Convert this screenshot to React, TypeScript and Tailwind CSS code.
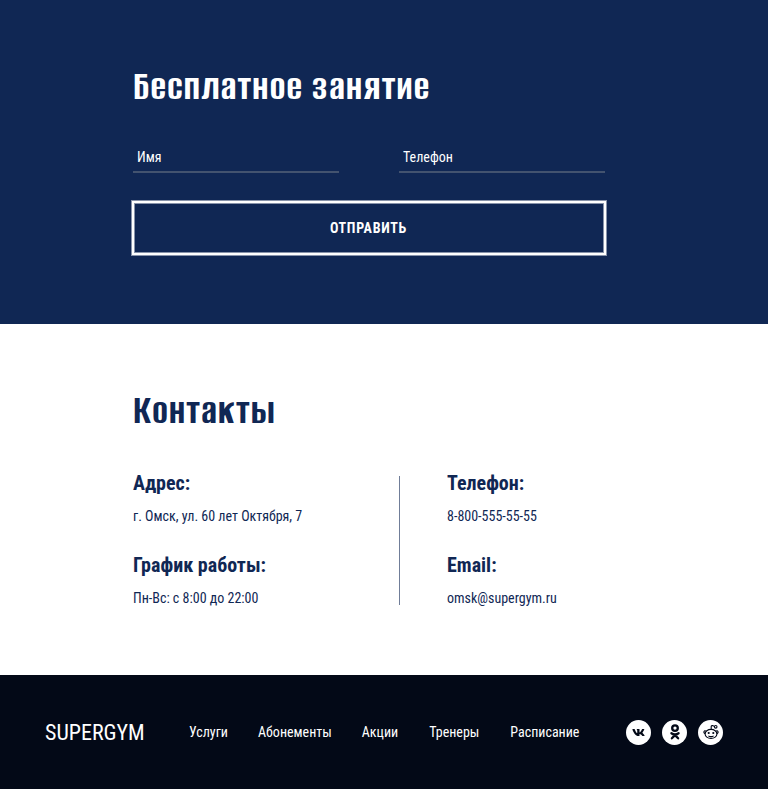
import type { ReactNode } from "react";
import { FaVk } from "react-icons/fa";

const links = [
  { label: "Услуги", offset: "ml-[45px]" },
  { label: "Абонементы", offset: "ml-[30px]" },
  { label: "Акции", offset: "ml-[30px]" },
  { label: "Тренеры", offset: "ml-[31px]" },
  { label: "Расписание", offset: "ml-[31px]" },
];

function OkIcon() {
  return (
    <svg viewBox="0 0 16 16" className="size-4" fill="none" stroke="currentColor" strokeWidth="2.3" strokeLinecap="round" strokeLinejoin="round">
      <circle cx="8" cy="4.1" r="2.8" />
      <path d="M4.4 9.2c2.1 1.5 5.1 1.5 7.2 0M4.9 14.3 8 11.1l3.1 3.2" />
    </svg>
  );
}

function RedditIcon() {
  return (
    <svg viewBox="0 0 16 16" className="size-4" fill="none" stroke="currentColor" strokeWidth="1.1">
      <ellipse cx="8" cy="9.9" rx="5.9" ry="4.5" />
      <path d="M3.2 7.2C1.4 5.8-.3 8.3 2.1 9.8M12.8 7.2c1.8-1.4 3.5 1.1 1.1 2.6M8.2 5.4V2.8c0-1 .6-1.3 1.4-1.2l1.6.6" />
      <circle cx="12.7" cy="2.8" r="1.3" />
      <path d="M5.4 11.8c1.2 1.1 4 1.1 5.2 0" />
      <circle cx="5.7" cy="9" r="1.1" fill="currentColor" stroke="none" />
      <circle cx="10.3" cy="9" r="1.1" fill="currentColor" stroke="none" />
    </svg>
  );
}

function Social({ children, label }: { children: ReactNode; label: string }) {
  return (
    <a href="#" aria-label={label} className="flex size-[25px] items-center justify-center rounded-full bg-white text-[#030917]">
      {children}
    </a>
  );
}

function Contact({ title, value }: { title: string; value: string }) {
  return (
    <div className="h-[82px]">
      <h3 className="text-[20px] font-bold leading-[24px]">{title}</h3>
      <p className="mt-[13px] text-[14px] leading-4">{value}</p>
    </div>
  );
}

function Heading({ children }: { children: ReactNode }) {
  return (
    <h2 className="font-['Alumni_Sans','Oswald','Roboto_Condensed',sans-serif] text-[42px] font-bold leading-[52px] tracking-[0.03em]">
      {children}
    </h2>
  );
}

export default function App() {
  return (
    <div className="w-full font-['Roboto_Condensed','Roboto',sans-serif] text-[14px] leading-4 text-[#102754]">
      <section className="h-[324px] bg-[#102754] pl-[133px] pt-[61px] text-white">
        <Heading>Бесплатное занятие</Heading>
        <form className="mt-[30px] w-[472px]">
          <div className="flex justify-between">
            <input placeholder="Имя" className="h-[30px] w-[206px] border-b-2 border-[#43536f] px-1 pb-[1px] outline-none placeholder:text-white" />
            <input placeholder="Телефон" className="h-[30px] w-[206px] border-b-2 border-[#43536f] px-1 pb-[1px] outline-none placeholder:text-white" />
          </div>
          <button type="button" className="-ml-px mt-[28px] block h-[54px] w-[474px] border-2 border-white pr-px font-bold uppercase tracking-[0.05em] shadow-[0_0_0_1px_#8893aa,inset_0_0_0_1px_#8893aa]">
            Отправить
          </button>
        </form>
      </section>
      <section className="h-[351px] bg-white pl-[133px] pt-[61px]">
        <Heading>Контакты</Heading>
        <div className="mt-[34px] flex">
          <div className="w-[266px]">
            <Contact title="Адрес:" value="г. Омск, ул. 60 лет Октября, 7" />
            <Contact title="График работы:" value="Пн-Вс: с 8:00 до 22:00" />
          </div>
          <div className="mt-[5px] h-[129px] w-px bg-[#707d98]" />
          <div className="ml-[47px]">
            <Contact title="Телефон:" value="8-800-555-55-55" />
            <Contact title="Email:" value="omsk@supergym.ru" />
          </div>
        </div>
      </section>
      <footer className="flex h-[114px] items-center bg-[#030917] px-[45px] text-white">
        <span className="w-[99px] pt-[2px] text-[22px] leading-[26px]">SUPERGYM</span>
        <nav className="flex">
          {links.map((link) => (
            <a key={link.label} href="#" className={link.offset}>{link.label}</a>
          ))}
        </nav>
        <div className="ml-auto flex gap-[11px]">
          <Social label="VK"><FaVk className="size-[13px]" /></Social>
          <Social label="OK"><OkIcon /></Social>
          <Social label="Reddit"><RedditIcon /></Social>
        </div>
      </footer>
    </div>
  );
}
